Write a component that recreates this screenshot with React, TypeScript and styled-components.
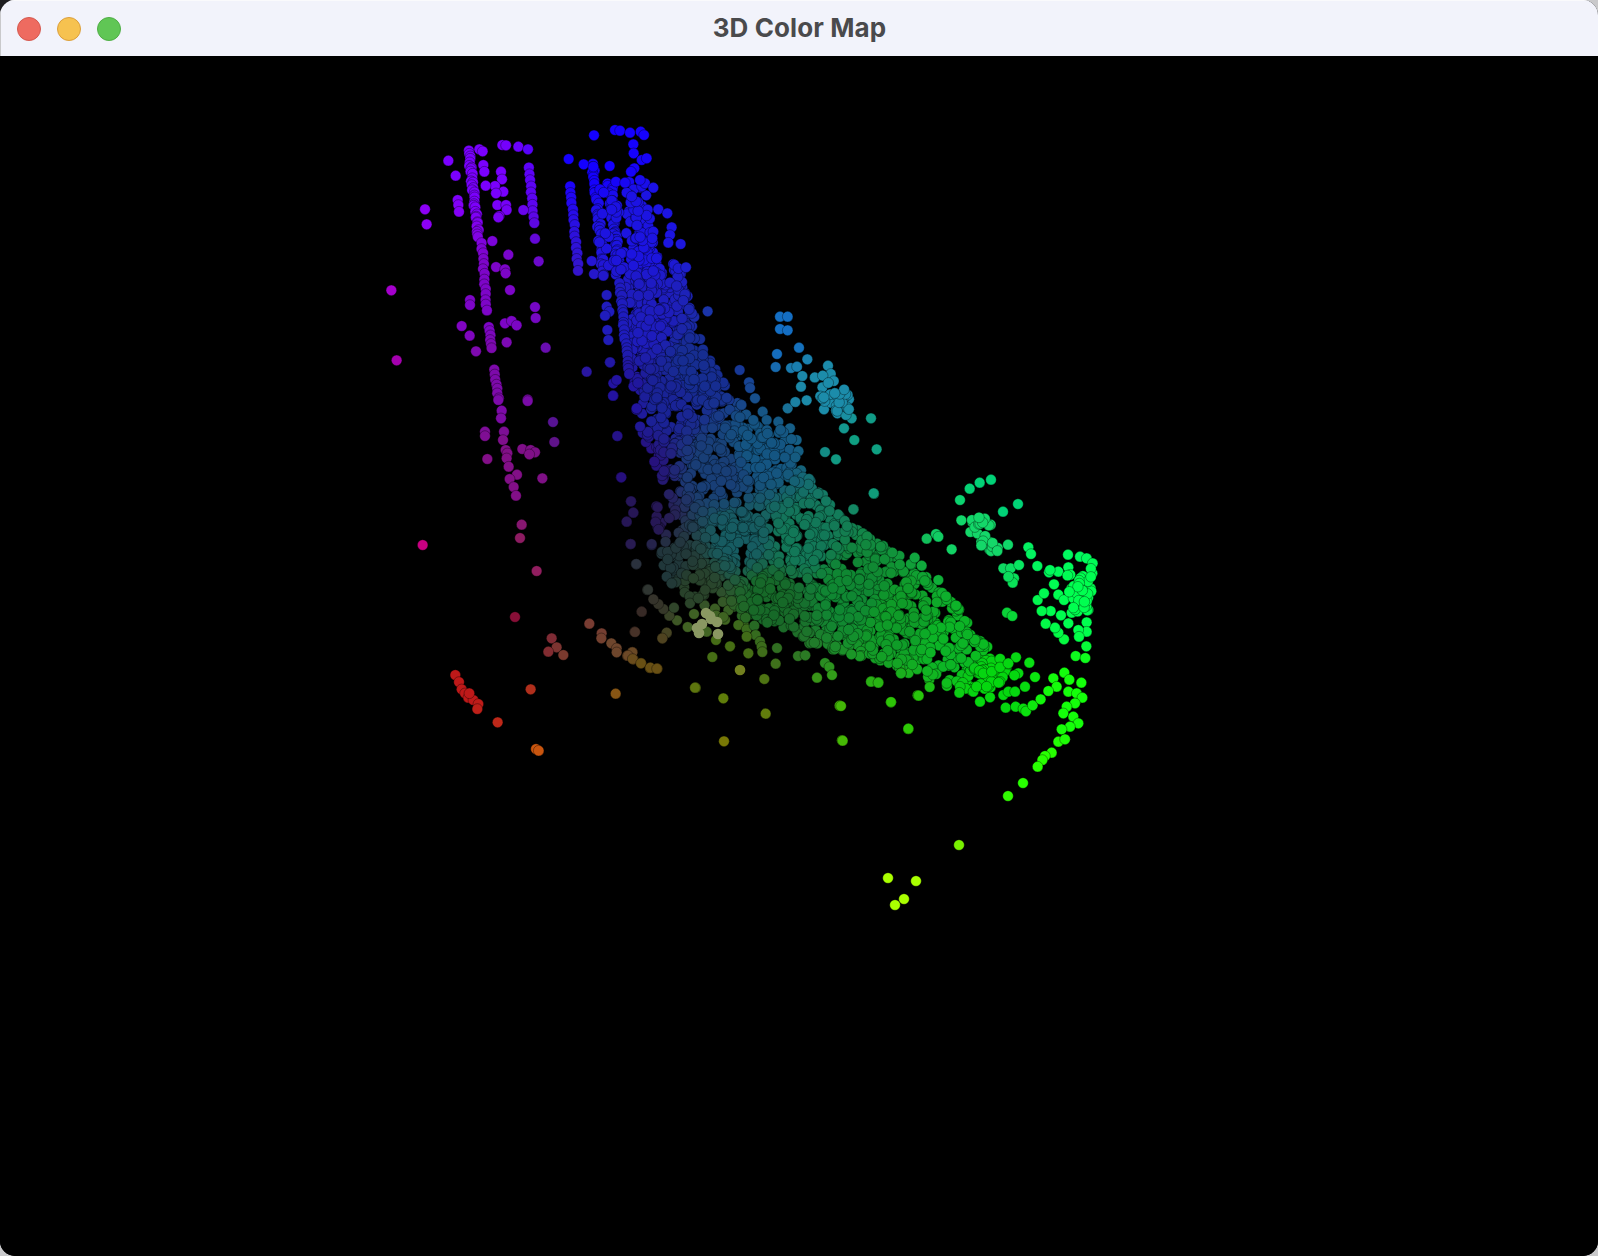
import React, { useMemo } from 'react';
import styled, { createGlobalStyle } from 'styled-components';

const Global = createGlobalStyle`
  html, body {
    margin: 0;
    padding: 0;
    background: linear-gradient(#1e1e20, #1e1e20) no-repeat 0 0 / 14px 14px, #c9c9cb;
  }
  #root { width: 1598px; height: 1256px; overflow: hidden; }
`;

const Win = styled.div`
  width: 1598px;
  height: 1256px;
  display: flex;
  flex-direction: column;
  border-radius: 15px;
  overflow: hidden;
  background: #000;
`;
const TitleBar = styled.header`
  height: 56px;
  flex: none;
  display: grid;
  grid-template-columns: 1fr auto 1fr;
  align-items: center;
  padding: 0 16px;
  box-sizing: border-box;
  background: #f2f3fb;
  border-left: 1px solid #c9c9cb;
  border-top: 1px solid #fafafc;
`;
const Lights = styled.div`
  display: flex;
  gap: 16px;
`;
const Light = styled.span<{ $fill: string; $edge: string }>`
  width: 24px;
  height: 24px;
  box-sizing: border-box;
  border-radius: 50%;
  background: ${p => p.$fill};
  border: 1px solid ${p => p.$edge};
`;
const Title = styled.h1`
  margin: 0;
  padding-bottom: 3px;
  font: 700 26px Inter, "Liberation Sans", sans-serif;
  letter-spacing: 0.1px;
  color: #4a4a4c;
`;
const Canvas = styled.main`
  flex: 1;
  min-height: 0;
  background: #000;
`;
const Plot = styled.svg`
  display: block;
  width: 100%;
  height: 100%;
`;

type P = [number, number];

const anchors: [number, number, number, number, number][] = [
  [470, 170, 122, 0, 255], [420, 215, 140, 0, 245], [600, 150, 20, 0, 255], [640, 230, 28, 20, 225],
  [392, 290, 165, 0, 205], [397, 360, 165, 0, 175], [490, 300, 125, 5, 200], [495, 380, 125, 10, 170],
  [510, 480, 130, 15, 135], [423, 545, 200, 0, 130], [535, 570, 145, 30, 95], [515, 617, 135, 15, 55],
  [470, 690, 190, 25, 25], [495, 720, 190, 40, 25], [539, 750, 200, 85, 15], [612, 692, 135, 85, 20], [590, 625, 120, 60, 50],
  [620, 640, 110, 70, 45], [650, 665, 105, 80, 20], [640, 620, 55, 42, 38], [700, 625, 65, 100, 35], [725, 650, 70, 110, 20],
  [690, 590, 40, 65, 42], [670, 570, 32, 55, 58], [640, 520, 38, 22, 85], [630, 465, 38, 15, 125],
  [625, 400, 35, 18, 160], [660, 400, 25, 35, 150], [640, 320, 30, 28, 190], [700, 370, 22, 45, 145],
  [780, 320, 20, 110, 195], [830, 390, 28, 140, 170], [870, 450, 15, 160, 130], [760, 450, 20, 85, 130],
  [720, 470, 24, 62, 118], [740, 540, 22, 92, 98], [800, 540, 18, 120, 88], [850, 590, 15, 135, 50], [770, 600, 22, 105, 40],
  [900, 620, 15, 155, 40], [720, 700, 95, 125, 10], [725, 745, 120, 120, 5], [840, 740, 70, 185, 5], [905, 730, 45, 200, 5],
  [950, 640, 12, 180, 38], [1000, 690, 5, 215, 15], [985, 530, 20, 215, 105], [1000, 500, 0, 210, 120], [1080, 600, 0, 255, 80],
  [1060, 540, 0, 250, 95], [1070, 700, 20, 255, 10], [1040, 770, 40, 255, 0], [960, 845, 120, 240, 0], [900, 890, 170, 255, 0],
];

function colorAt(x: number, y: number): string {
  let w = 0, r = 0, g = 0, b = 0;
  for (const [ax, ay, cr, cg, cb] of anchors) {
    const d = (ax - x) ** 2 + (ay - y) ** 2 + 16;
    const k = 1 / (d * d);
    w += k; r += cr * k; g += cg * k; b += cb * k;
  }
  return `rgb(${Math.round(r / w)},${Math.round(g / w)},${Math.round(b / w)})`;
}

function rng(seed: number) {
  return () => {
    seed |= 0; seed = (seed + 0x6d2b79f5) | 0;
    let t = Math.imul(seed ^ (seed >>> 15), 1 | seed);
    t = (t + Math.imul(t ^ (t >>> 7), 61 | t)) ^ t;
    return ((t ^ (t >>> 14)) >>> 0) / 4294967296;
  };
}

const inside = (poly: P[], x: number, y: number) => {
  let c = false;
  for (let i = 0, j = poly.length - 1; i < poly.length; j = i++) {
    const [xi, yi] = poly[i], [xj, yj] = poly[j];
    if (yi > y !== yj > y && x < ((xj - xi) * (y - yi)) / (yj - yi) + xi) c = !c;
  }
  return c;
};

function buildPoints(): P[] {
  const rand = rng(42);
  const pts: P[] = [];
  const off = (ox: number, oy: number, list: number[][]) =>
    list.forEach(([x, y]) => pts.push([ox + x / 3, oy + y / 3]));
  const chain = (ox: number, oy: number, x1: number, y1: number, x2: number, y2: number, n: number, jit = 1) => {
    for (let i = 0; i < n; i++) {
      const t = n === 1 ? 0 : i / (n - 1);
      pts.push([ox + (x1 + (x2 - x1) * t) / 3 + (rand() - 0.5) * jit, oy + (y1 + (y2 - y1) * t) / 3 + (rand() - 0.5) * jit]);
    }
  };
  const blob = (poly: P[], n: number) => {
    const xs = poly.map(p => p[0]), ys = poly.map(p => p[1]);
    const x0 = Math.min(...xs), x1 = Math.max(...xs), y0 = Math.min(...ys), y1 = Math.max(...ys);
    let c = 0;
    while (c < n) {
      const x = x0 + rand() * (x1 - x0), y = y0 + rand() * (y1 - y0);
      if (inside(poly, x, y)) { pts.push([x, y]); c++; }
    }
  };
  const zblob = (ox: number, oy: number, list: P[], n: number) =>
    blob(list.map(([x, y]) => [ox + x / 3, oy + y / 3] as P), n);

  // main band
  blob([[640, 215], [662, 260], [680, 265], [700, 336], [720, 377], [760, 428], [810, 479], [850, 525], [900, 555], [948, 595], [994, 650], [1012, 665], [1000, 690], [958, 690], [876, 662], [805, 642], [744, 611], [703, 581], [685, 540], [668, 499], [640, 428], [626, 357], [624, 285]], 1800);
  blob([[650, 500], [700, 530], [750, 590], [790, 625], [730, 625], [680, 595], [655, 560]], 130);

  // violet columns
  const A: [number, number] = [370, 110];
  chain(...A, 297, 125, 325, 380, 34, 2.5);
  chain(...A, 335, 400, 350, 600, 14, 1.5);
  chain(...A, 357, 650, 365, 715, 6);
  chain(...A, 373, 780, 385, 865, 7);
  chain(...A, 478, 173, 492, 340, 10);
  chain(...A, 601, 230, 625, 480, 16, 1.5);
  chain(...A, 670, 160, 700, 490, 36, 4);
  chain(...A, 720, 220, 745, 490, 40, 5);
  chain(...A, 750, 520, 775, 790, 22, 2);
  zblob(...A, [[680, 210], [780, 210], [790, 500], [690, 490]], 30);
  zblob(...A, [[765, 210], [830, 220], [870, 500], [900, 620], [820, 700], [790, 500]], 100);
  zblob(...A, [[800, 620], [960, 660], [1070, 880], [860, 900], [810, 800]], 70);
  off(...A, [
    [235, 152], [257, 197], [165, 298], [170, 343], [64, 541], [80, 751], [263, 270], [265, 285], [267, 305],
    [397, 105], [408, 106], [445, 110], [474, 118], [596, 147], [641, 163], [672, 76], [735, 60], [750, 62], [780, 68], [812, 65], [822, 75],
    [790, 103], [791, 130], [815, 150], [830, 145], [793, 175], [783, 185], [765, 218], [825, 220], [850, 233], [810, 210],
    [328, 118], [338, 124], [393, 185], [396, 208], [375, 228], [400, 245], [378, 250], [382, 285], [408, 285], [410, 300], [388, 318], [385, 322], [347, 227], [340, 165], [343, 185],
    [367, 393], [415, 434], [378, 471], [405, 478], [407, 490], [420, 540], [300, 570], [300, 585], [275, 648], [299, 677], [318, 724], [410, 697], [405, 640], [425, 633], [440, 646],
    [495, 591], [497, 624], [527, 713], [473, 869], [495, 386], [506, 454], [460, 300],
    [710, 555], [710, 590], [718, 605], [705, 617], [712, 660], [715, 690], [720, 757], [650, 785], [730, 820], [740, 810], [730, 857], [665, 453], [672, 492], [700, 497],
    [865, 298], [892, 310], [905, 352], [900, 375], [895, 398], [932, 402], [925, 475], [948, 472], [920, 528], [945, 553], [940, 572], [957, 598], [1013, 604], [850, 365], [847, 385], [860, 445],
    [670, 170], [719, 168],
  ]);

  // teal spur and edge scatter
  const B: [number, number] = [600, 300];
  off(...B, [
    [540, 50], [563, 50], [540, 87], [563, 91], [597, 143], [531, 162], [622, 178], [527, 201], [573, 204], [591, 200], [684, 197], [419, 210], [447, 247], [450, 264], [465, 295], [563, 325],
    [586, 306], [620, 301], [672, 328], [607, 228], [603, 260], [488, 335], [460, 360], [755, 355], [813, 355], [732, 385], [763, 420], [830, 448], [675, 456], [708, 478], [822, 581], [761, 628],
    [443, 406], [52, 408], [63, 532], [30, 187], [39, 287], [93, 604], [100, 638], [80, 665], [92, 732], [109, 793], [143, 868], [155, 735], [712, 340], [738, 345],
    [500, 360], [535, 365], [570, 385], [590, 420], [485, 412],
  ]);
  zblob(...B, [[640, 225], [700, 220], [745, 270], [750, 345], [710, 340], [660, 290]], 34);
  zblob(...B, [[480, 380], [570, 390], [610, 470], [500, 480]], 22);

  // lower scatter
  off(620, 540, [
    [32, 12], [95, 12], [48, 72], [82, 150], [65, 215], [44, 275], [37, 336], [22, 347], [40, 358], [63, 369], [90, 384], [112, 386], [127, 295], [140, 279], [203, 261], [171, 241], [148, 227], [162, 203], [130, 207],
    [115, 192], [100, 178], [140, 110], [155, 130], [185, 100], [200, 105], [220, 115], [255, 150], [210, 190], [235, 175], [222, 222], [355, 255], [380, 268], [403, 257], [407, 285], [420, 305], [425, 320], [380, 290],
    [260, 275], [288, 300], [330, 319], [277, 351], [385, 340], [427, 336], [471, 324], [467, 371], [433, 417], [227, 443], [310, 475],
    [437, 521], [312, 604], [534, 348], [556, 346], [615, 369], [628, 381], [636, 405], [591, 413], [659, 497], [754, 424], [775, 427], [813, 487], [893, 466], [865, 567], [666, 601], [843, 399], [785, 350], [832, 370],
  ]);

  // spring-green clusters
  const C: [number, number] = [840, 460];
  off(...C, [
    [101, 100], [40, 148], [360, 120], [389, 86], [419, 68], [453, 59], [534, 132], [489, 155], [364, 181], [260, 236], [288, 222], [295, 230], [335, 268], [224, 293], [245, 317], [295, 360], [318, 409],
    [565, 262], [573, 282], [592, 318], [504, 254], [501, 458], [517, 468], [528, 592], [568, 608], [535, 640], [523, 646], [585, 651], [497, 743], [527, 740], [550, 746], [558, 754], [578, 736], [602, 718],
    [143, 572], [125, 590], [183, 640], [93, 665], [115, 668], [236, 707], [269, 681], [320, 669], [153, 726], [205, 806], [8, 842], [3, 738], [707, 588], [736, 594], [739, 559],
    [490, 325], [512, 325], [537, 315], [522, 355], [518, 368], [505, 350],
    [684, 284], [720, 290], [740, 295], [758, 310], [757, 340], [752, 385], [745, 450], [740, 487], [740, 515], [715, 510], [717, 530], [672, 538], [655, 518], [645, 503], [685, 490], [663, 466], [695, 458], [632, 453], [605, 453],
    [617, 491], [593, 420], [612, 400], [642, 373], [655, 404], [672, 420], [627, 337], [655, 335], [685, 322], [630, 330],
    [673, 638], [688, 659], [724, 668], [640, 655], [650, 680], [625, 693], [685, 695], [710, 700], [727, 713], [705, 730], [680, 740], [670, 760], [700, 770], [715, 790], [690, 800], [665, 808], [655, 845], [675, 838], [635, 878], [615, 888], [607, 900], [593, 920],
    [480, 665], [450, 712], [420, 725], [490, 705], [505, 695], [525, 695], [555, 680], [360, 680], [358, 698], [400, 695], [410, 680], [440, 680], [476, 668], [430, 640], [455, 635], [480, 622], [505, 610],
  ]);
  zblob(...C, [[385, 160], [430, 170], [475, 200], [460, 240], [505, 290], [470, 300], [430, 270], [380, 210]], 28);
  zblob(...C, [[680, 340], [760, 320], [750, 470], [690, 470]], 36);

  // violet tail, reds and oranges
  off(400, 400, [
    [295, 0], [383, 3], [459, 66], [463, 126], [255, 95], [255, 108], [262, 177], [305, 32], [303, 55], [312, 95], [309, 120], [317, 150], [322, 160], [320, 175], [326, 200], [351, 224], [329, 237], [341, 261], [348, 287],
    [367, 147], [392, 150], [405, 157], [388, 163], [427, 235], [365, 374], [360, 414], [410, 513], [68, 435], [345, 651], [568, 671], [605, 700], [604, 715], [634, 730], [650, 745], [650, 757], [697, 757], [684, 767], [698, 777],
    [723, 790], [751, 803], [771, 806], [705, 696], [725, 635], [800, 698], [787, 715], [885, 863], [647, 881], [455, 715], [470, 742], [445, 755], [490, 765], [392, 868], [293, 967], [408, 1047], [416, 1052],
    [166, 825], [177, 846], [185, 868], [195, 880], [205, 893], [220, 900], [235, 912], [232, 927], [208, 880],
    [680, 365], [692, 432], [709, 492], [744, 569], [700, 338], [693, 304], [664, 232], [652, 108],
  ]);

  // yellow-green strays
  pts.push([959, 845], [888, 878], [916, 881], [904, 899], [895, 905], [1023, 783], [1008, 796]);
  return pts;
}

const paleDots: P[] = [
  [706, 613], [710, 616], [717, 622], [702, 624], [699, 633], [718, 634], [711, 619], [697, 628],
];
const oliveLight: P = [740, 670];

export default function App() {
  const points = useMemo(buildPoints, []);
  return (
    <Win>
      <Global />
      <TitleBar>
        <Lights>
          <Light $fill="#ee6b60" $edge="#d5594f" />
          <Light $fill="#f6c250" $edge="#dc9f3c" />
          <Light $fill="#60c655" $edge="#4fae45" />
        </Lights>
        <Title>3D Color Map</Title>
        <span />
      </TitleBar>
      <Canvas>
        <Plot viewBox="0 56 1598 1200" preserveAspectRatio="xMinYMin meet">
          {points.map(([x, y], i) => (
            <circle key={i} cx={x} cy={y} r={5.3} fill={colorAt(x, y)} stroke="#000" strokeWidth={0.35} />
          ))}
          {paleDots.map(([x, y], i) => (
            <circle key={i} cx={x} cy={y} r={5.3} fill="#8a9862" />
          ))}
          <circle cx={oliveLight[0]} cy={oliveLight[1]} r={5.3} fill="#72801f" />
        </Plot>
      </Canvas>
    </Win>
  );
}
